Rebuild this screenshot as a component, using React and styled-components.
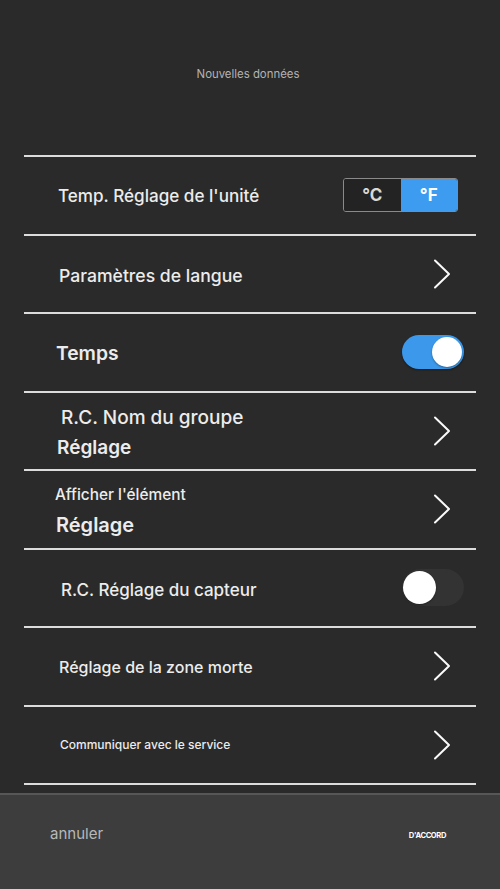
import React, { useState } from 'react';
import styled, { createGlobalStyle, css } from 'styled-components';

const GlobalStyle = createGlobalStyle`
  html, body {
    margin: 0;
    padding: 0;
    background: #2a2a2a;
  }
  * { box-sizing: border-box; }
`;

const Screen = styled.div`
  width: 500px;
  height: 889px;
  display: flex;
  flex-direction: column;
  background: #2a2a2a;
  font-family: Inter, "Liberation Sans", sans-serif;
  color: #ededed;
  overflow: hidden;
`;

const Header = styled.header`
  height: 155px;
  display: flex;
  justify-content: center;
  padding-top: 66px;
`;

const Title = styled.h1`
  margin: 0;
  font-size: 11.4px;
  font-weight: 400;
  color: #b4b4b4;
  line-height: 16px;
  padding-right: 4px;
`;

const List = styled.ul`
  list-style: none;
  margin: 0 24px;
  padding: 0;
  border-top: 2px solid #dcdcdc;
`;

const Row = styled.li`
  height: 78.5px;
  border-bottom: 2px solid #dcdcdc;
  display: flex;
  align-items: center;
  justify-content: space-between;
  padding-right: ${({ pr }) => pr || 24}px;
`;

const LabelStack = styled.div`
  display: flex;
  flex-direction: column;
  gap: ${({ gap }) => gap || 0}px;
  padding-top: ${({ pt }) => pt || 0}px;
`;

const Label = styled.span`
  font-size: ${({ size }) => size || 16}px;
  font-weight: ${({ weight }) => weight || 500};
  padding-left: ${({ indent }) => indent || 34}px;
  color: #ececec;
  line-height: 1.2;
  margin-top: ${({ mt }) => mt || 0}px;
`;

const Segmented = styled.div`
  display: flex;
  width: 115px;
  height: 34px;
  border: 1px solid #8a8a8a;
  border-radius: 3px;
  overflow: hidden;
`;

const Segment = styled.button`
  flex: 1;
  border: none;
  font-family: inherit;
  font-size: 17px;
  font-weight: 700;
  color: #d8d8d8;
  background: #232323;
  padding: 0;
  ${({ active }) => active && css`
    background: #3d9cf0;
    color: #fff;
  `}
`;

const Switch = styled.div`
  width: 62px;
  height: ${({ on }) => on ? 34 : 37}px;
  border-radius: 20px;
  background: ${({ on }) => on ? '#3b98ea' : '#333333'};
  position: relative;
  ${({ on }) => on && css`
    box-shadow: 0 1px 2px rgba(0,0,0,.4);
  `}
`;

const Knob = styled.span`
  position: absolute;
  top: 2px;
  ${({ on }) => on ? 'right: 2px;' : 'left: 1px;'}
  width: ${({ on }) => on ? 30 : 33}px;
  height: ${({ on }) => on ? 30 : 33}px;
  border-radius: 50%;
  background: #fff;
  box-shadow: 0 1px 2px rgba(0,0,0,.35);
`;

const Footer = styled.footer`
  margin-top: auto;
  height: 96px;
  background: #3d3d3d;
  border-top: 2px solid #575757;
  display: flex;
  align-items: flex-start;
  justify-content: space-between;
  padding: 29px 54px 0 50px;
`;

const FooterButton = styled.button`
  border: none;
  background: transparent;
  padding: 0;
  font-family: inherit;
  color: ${({ primary }) => primary ? '#fff' : '#b8b8b8'};
  font-size: ${({ primary }) => primary ? 7.6 : 15}px;
  font-weight: ${({ primary }) => primary ? 700 : 400};
  line-height: 20px;
  margin-top: ${({ primary }) => primary ? 2 : 0}px;
  letter-spacing: ${({ primary }) => primary ? -0.4 : 0}px;
`;

const Chevron = () => (
  <svg width="20" height="30" viewBox="0 0 20 30" fill="none">
    <path d="M3 1.5 L17 15 L3 28.5" stroke="#fafafa" strokeWidth="2" strokeLinecap="round" strokeLinejoin="round" />
  </svg>
);

export default function App() {
  const [unit, setUnit] = useState('F');
  const [time, setTime] = useState(true);
  const [sensor, setSensor] = useState(false);

  return (
    <Screen>
      <GlobalStyle />
      <Header>
        <Title>Nouvelles données</Title>
      </Header>
      <List>
        <Row pr={18}>
          <Label size={17.1} mt={2}>Temp. Réglage de l'unité</Label>
          <Segmented>
            <Segment active={unit === 'C'} onClick={() => setUnit('C')}>°C</Segment>
            <Segment active={unit === 'F'} onClick={() => setUnit('F')}>°F</Segment>
          </Segmented>
        </Row>
        <Row>
          <Label size={17.6} indent={35} mt={4}>Paramètres de langue</Label>
          <Chevron />
        </Row>
        <Row pr={12}>
          <Label size={19.3} weight={600} indent={32} mt={2}>Temps</Label>
          <Switch on={time} onClick={() => setTime(!time)}>
            <Knob on={time} />
          </Switch>
        </Row>
        <Row>
          <LabelStack gap={7} pt={5}>
            <Label size={19} indent={37}>R.C. Nom du groupe</Label>
            <Label size={19} weight={600} indent={33}>Réglage</Label>
          </LabelStack>
          <Chevron />
        </Row>
        <Row>
          <LabelStack gap={9} pt={4}>
            <Label size={15.4} indent={31}>Afficher l'élément</Label>
            <Label size={20} weight={600} indent={32}>Réglage</Label>
          </LabelStack>
          <Chevron />
        </Row>
        <Row pr={12}>
          <Label size={17} indent={37} mt={5}>R.C. Réglage du capteur</Label>
          <Switch on={sensor} onClick={() => setSensor(!sensor)}>
            <Knob on={sensor} />
          </Switch>
        </Row>
        <Row>
          <Label size={16} indent={35} mt={2}>Réglage de la zone morte</Label>
          <Chevron />
        </Row>
        <Row>
          <Label size={12} indent={36}>Communiquer avec le service</Label>
          <Chevron />
        </Row>
      </List>
      <Footer>
        <FooterButton>annuler</FooterButton>
        <FooterButton primary>D'ACCORD</FooterButton>
      </Footer>
    </Screen>
  );
}
